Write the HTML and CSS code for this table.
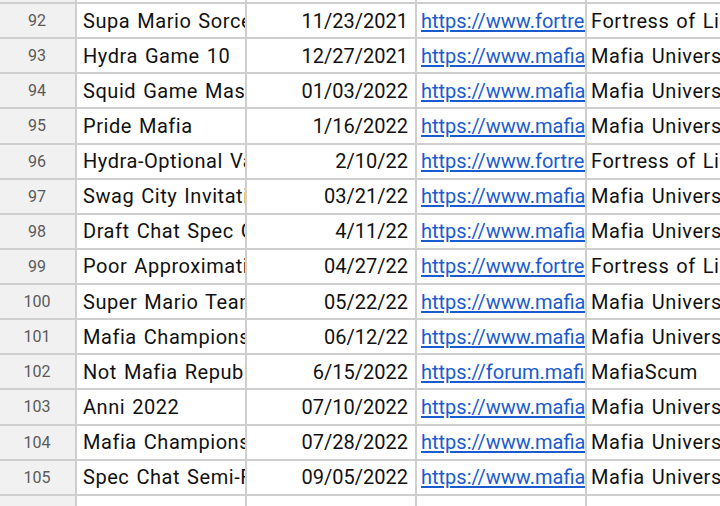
FILE: index.html
```html
<!DOCTYPE html>
<html>
<head>
<meta charset="utf-8">
<link rel="stylesheet" href="styles.css">
</head>
<body>
<div class="sheet">
  <div class="rh">91</div><div class="c"></div><div class="c num"></div><div class="c lnk"></div><div class="c src"></div>

  <div class="rh">92</div><div class="c">Supa Mario Sorcerers</div><div class="c num">11/23/2021</div><div class="c lnk"><a href="#">https://www.fortressoflies.com/t/supa-mario</a></div><div class="c src">Fortress of Lies</div>
  <div class="rh">93</div><div class="c">Hydra Game 10</div><div class="c num">12/27/2021</div><div class="c lnk"><a href="#">https://www.mafiauniverse.com/forums/threads</a></div><div class="c src">Mafia Universe</div>
  <div class="rh">94</div><div class="c">Squid Game Mash</div><div class="c num">01/03/2022</div><div class="c lnk"><a href="#">https://www.mafiauniverse.com/forums/threads</a></div><div class="c src">Mafia Universe</div>
  <div class="rh">95</div><div class="c">Pride Mafia</div><div class="c num">1/16/2022</div><div class="c lnk"><a href="#">https://www.mafiauniverse.com/forums/threads</a></div><div class="c src">Mafia Universe</div>
  <div class="rh">96</div><div class="c">Hydra-Optional Vanilla</div><div class="c num">2/10/22</div><div class="c lnk"><a href="#">https://www.fortressoflies.com/t/hydra</a></div><div class="c src">Fortress of Lies</div>
  <div class="rh">97</div><div class="c">Swag City Invitational</div><div class="c num">03/21/22</div><div class="c lnk"><a href="#">https://www.mafiauniverse.com/forums/threads</a></div><div class="c src">Mafia Universe</div>
  <div class="rh">98</div><div class="c">Draft Chat Spec Game</div><div class="c num">4/11/22</div><div class="c lnk"><a href="#">https://www.mafiauniverse.com/forums/threads</a></div><div class="c src">Mafia Universe</div>
  <div class="rh">99</div><div class="c">Poor Approximation</div><div class="c num">04/27/22</div><div class="c lnk"><a href="#">https://www.fortressoflies.com/t/poor</a></div><div class="c src">Fortress of Lies</div>
  <div class="rh">100</div><div class="c">Super Mario Team</div><div class="c num">05/22/22</div><div class="c lnk"><a href="#">https://www.mafiauniverse.com/forums/threads</a></div><div class="c src">Mafia Universe</div>
  <div class="rh">101</div><div class="c">Mafia Championship</div><div class="c num">06/12/22</div><div class="c lnk"><a href="#">https://www.mafiauniverse.com/forums/threads</a></div><div class="c src">Mafia Universe</div>
  <div class="rh">102</div><div class="c">Not Mafia Republic</div><div class="c num">6/15/2022</div><div class="c lnk"><a href="#">https://forum.mafiascum.net/viewtopic.php</a></div><div class="c src">MafiaScum</div>
  <div class="rh">103</div><div class="c">Anni 2022</div><div class="c num">07/10/2022</div><div class="c lnk"><a href="#">https://www.mafiauniverse.com/forums/threads</a></div><div class="c src">Mafia Universe</div>
  <div class="rh">104</div><div class="c">Mafia Championship</div><div class="c num">07/28/2022</div><div class="c lnk"><a href="#">https://www.mafiauniverse.com/forums/threads</a></div><div class="c src">Mafia Universe</div>
  <div class="rh">105</div><div class="c">Spec Chat Semi-Final</div><div class="c num">09/05/2022</div><div class="c lnk"><a href="#">https://www.mafiauniverse.com/forums/threads</a></div><div class="c src">Mafia Universe</div>
  <div class="rh">106</div><div class="c"></div><div class="c num"></div><div class="c lnk"></div><div class="c src"></div>
</div>
</body>
</html>
```

FILE: styles.css
```css
html, body {
  margin: 0;
  padding: 0;
  background: #ffffff;
  overflow: hidden;
}
body {
  width: 720px;
  height: 506px;
  font-family: Roboto, "Liberation Sans", Arial, sans-serif;
}
.sheet {
  display: grid;
  grid-template-columns: 77px 170px 170px 170px 200px;
  grid-auto-rows: 35.14px;
  margin-top: -31.14px;
}
.rh, .c {
  box-sizing: border-box;
  border-right: 2px solid #cfcfcf;
  border-bottom: 2px solid #cfcfcf;
  display: flex;
  align-items: center;
  overflow: hidden;
  white-space: nowrap;
}
.rh {
  background: #f1f1f1;
  justify-content: center;
  font-size: 16px;
  color: #5a5a5a;
  padding-right: 1px;
}
.c {
  font-size: 20px;
  color: #111111;
  padding-left: 6px;
  background: #ffffff;
  letter-spacing: 0.55px;
  word-spacing: 1.5px;
}
.c.src {
  padding-left: 4px;
}
.c.num {
  justify-content: flex-end;
  padding-left: 0;
  padding-right: 7px;
  letter-spacing: 0;
  word-spacing: 0;
}
.c.lnk {
  padding-left: 4px;
  letter-spacing: 0;
  word-spacing: 0;
}
.c a {
  color: #1a5bd0;
  text-decoration: underline;
  text-underline-offset: 2px;
}
```
